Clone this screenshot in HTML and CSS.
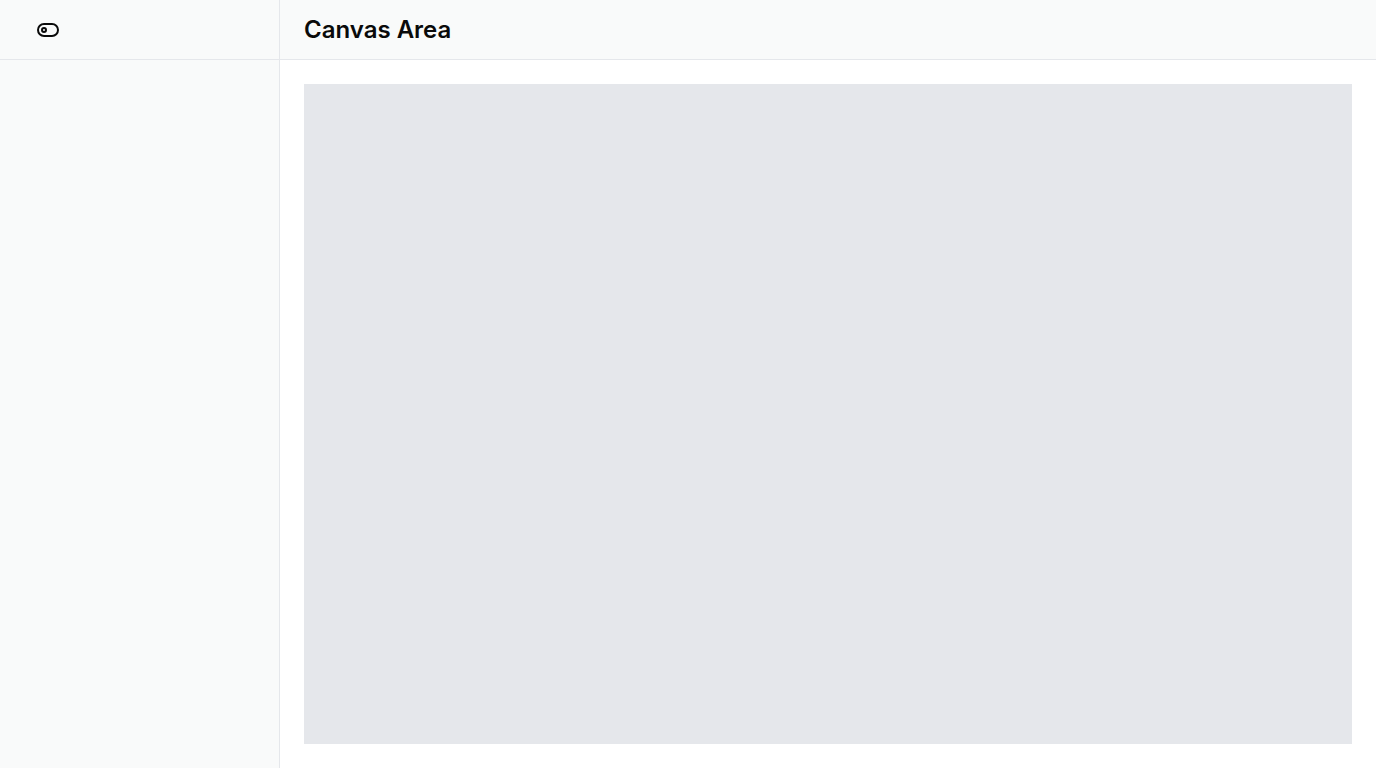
FILE: index.html
```html
<!DOCTYPE html>
<html>
<head>
<meta charset="utf-8">
<link rel="stylesheet" href="styles.css">
</head>
<body>
<div class="app">
  <aside class="sidebar">
    <div class="sidebar-head">
      <button class="toggle" aria-label="Toggle sidebar">
        <svg width="24" height="24" viewBox="0 0 24 24" fill="none" stroke="currentColor" stroke-width="2" stroke-linecap="round" stroke-linejoin="round"><circle cx="8" cy="12" r="2"/><rect x="2" y="6" width="20" height="12" rx="6"/></svg>
      </button>
    </div>
  </aside>
  <main class="main">
    <header class="main-head"><h1 class="title">Canvas Area</h1></header>
    <section class="content"><div class="canvas"></div></section>
  </main>
</div>
</body>
</html>
```
FILE: styles.css
```css
* { box-sizing: border-box; }
html, body { margin: 0; height: 100%; }
body { font-family: Inter, "Noto Sans", sans-serif; color: #0a0a0a; background: #fff; }
.app { display: flex; height: 100vh; }
.sidebar { width: 280px; flex: none; background: #f9fafa; border-right: 1px solid #e5e7eb; }
.sidebar-head { height: 60px; border-bottom: 1px solid #e5e7eb; display: flex; align-items: center; padding: 0 36px; }
.toggle { border: 0; background: none; padding: 0; display: flex; color: #0a0a0a; cursor: pointer; }
.main { flex: 1; display: flex; flex-direction: column; min-width: 0; }
.main-head { height: 60px; border-bottom: 1px solid #e5e7eb; background: #f9fafa; display: flex; align-items: center; padding: 0 24px; }
.title { margin: 0; font-size: 24px; font-weight: 600; }
.content { flex: 1; padding: 24px; display: flex; }
.canvas { flex: 1; background: #e5e7eb; }
```
